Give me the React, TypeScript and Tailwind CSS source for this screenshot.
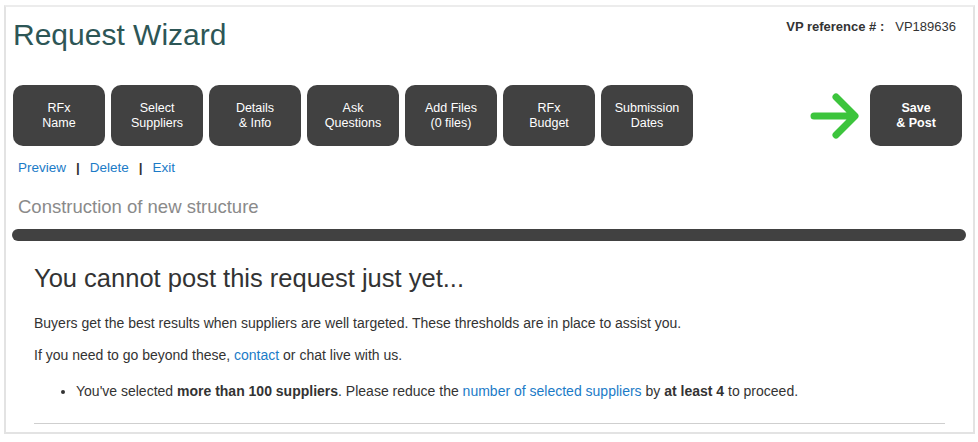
import React from 'react';

const steps = [
    ['RFx', 'Name'],
    ['Select', 'Suppliers'],
    ['Details', '& Info'],
    ['Ask', 'Questions'],
    ['Add Files', '(0 files)'],
    ['RFx', 'Budget'],
    ['Submission', 'Dates'],
];

const StepButton: React.FC<{ lines: string[]; bold?: boolean }> = ({ lines, bold }) => (
    <button
        className={`w-[92px] h-[61px] rounded-[10px] bg-[#414141] text-white text-[12.5px] leading-[15px] flex flex-col items-center justify-center ${bold ? 'font-bold' : ''}`}
    >
        {lines.map((l) => (
            <span key={l}>{l}</span>
        ))}
    </button>
);

export default function App() {
    return (
        <div className="w-[978px] h-[442px] bg-white pt-[5px] pl-[4px] font-['Liberation_Sans',Arial,sans-serif]">
            <div className="w-[971px] h-[429px] border-2 border-[#e3e3e3] border-t-[#ececec] relative">
                <div className="absolute right-[17px] top-[10px] text-[13px] text-[#333]">
                    <span className="font-bold">VP reference # :</span>
                    <span className="ml-[11px]">VP189636</span>
                </div>

                <h1 className="pl-[7px] pt-[11px] text-[30px] leading-[34px] text-[#2d5656]">Request Wizard</h1>

                <div className="flex items-center mt-[33px] pl-[7px] pr-[11px]">
                    <div className="flex gap-[6px]">
                        {steps.map((s, i) => (
                            <StepButton key={i} lines={s} />
                        ))}
                    </div>
                    <div className="flex-1" />
                    <svg width="50" height="48" viewBox="0 0 50 48" className="mr-[10px]">
                        <path
                            d="M4 24 H44 M26 5 L45 24 L26 43"
                            fill="none"
                            stroke="#3cc43c"
                            strokeWidth="7"
                            strokeLinecap="round"
                            strokeLinejoin="round"
                        />
                    </svg>
                    <StepButton lines={['Save', '& Post']} bold />
                </div>

                <div className="flex items-center pl-[12px] mt-[12px] text-[13.5px] text-[#1b7bc7]">
                    <a href="#">Preview</a>
                    <span className="text-[#333] mx-[10px] font-bold">|</span>
                    <a href="#">Delete</a>
                    <span className="text-[#333] mx-[10px] font-bold">|</span>
                    <a href="#">Exit</a>
                </div>

                <div className="pl-[12px] mt-[18px] text-[18.5px] text-[#8a8a8a] leading-[22px]">
                    Construction of new structure
                </div>

                <div className="ml-[6px] mr-[7px] mt-[11px] h-[12px] rounded-full bg-[#414141]" />

                <div className="px-[28px]">
                    <h2 className="mt-[22px] text-[25.5px] leading-[30px] text-[#333]">
                        You cannot post this request just yet...
                    </h2>
                    <p className="mt-[22px] text-[14px] text-[#333] leading-[17px]">
                        Buyers get the best results when suppliers are well targeted. These thresholds are in place to assist you.
                    </p>
                    <p className="mt-[15px] text-[14px] text-[#333] leading-[17px]">
                        If you need to go beyond these, <a href="#" className="text-[#1b7bc7]">contact</a> or chat live with us.
                    </p>
                    <ul className="mt-[19px] pl-[42px] list-disc text-[14px] text-[#333] leading-[17px]">
                        <li>
                            You've selected <b>more than 100 suppliers</b>. Please reduce the{' '}
                            <a href="#" className="text-[#1b7bc7]">number of selected suppliers</a> by <b>at least 4</b> to proceed.
                        </li>
                    </ul>
                    <div className="mt-[23px] border-t border-[#cfcfcf] w-[911px]" />
                </div>
            </div>
        </div>
    );
}
